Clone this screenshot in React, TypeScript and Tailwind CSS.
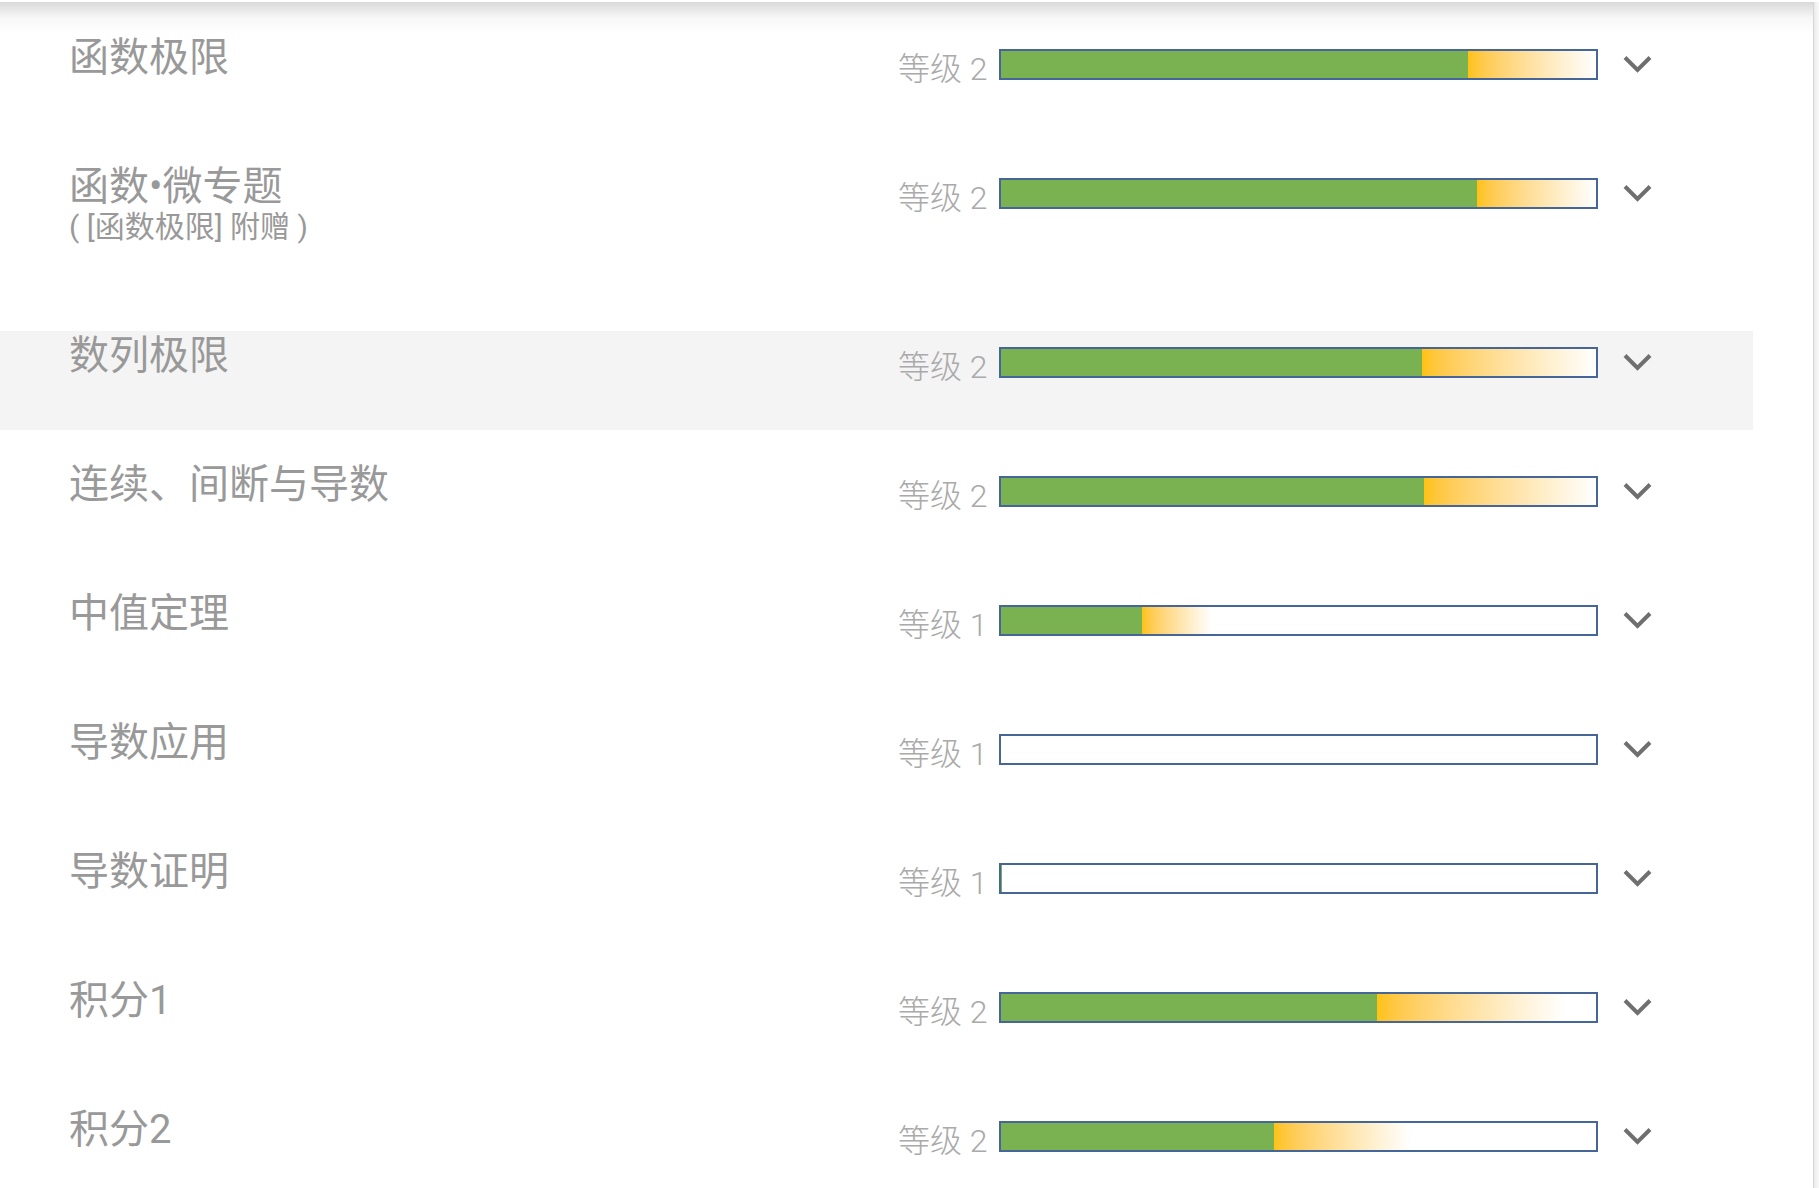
import { Fragment } from 'react'

type Topic = {
    title: string
    sub?: string
    level: number
    progress: number
    active?: boolean
}

const topics: Topic[] = [
    { title: '函数极限', level: 2, progress: 78.5 },
    { title: '函数•微专题', sub: '( [函数极限] 附赠 )', level: 2, progress: 80 },
    { title: '数列极限', level: 2, progress: 70.8, active: true },
    { title: '连续、间断与导数', level: 2, progress: 71.2 },
    { title: '中值定理', level: 1, progress: 23.7 },
    { title: '导数应用', level: 1, progress: 0 },
    { title: '导数证明', level: 1, progress: 0.3 },
    { title: '积分1', level: 2, progress: 63.2 },
    { title: '积分2', level: 2, progress: 46 },
]

const font = "font-['Roboto','Noto_Sans_CJK_SC',sans-serif]"

const Chevron = () => (
    <svg width="29" height="18" viewBox="0 0 29 18" className="block">
        <polyline points="2,2.5 14.5,15 27,2.5" fill="none" stroke="#6f6f6f" strokeWidth="4" />
    </svg>
)

const LevelBar = ({ progress }: { progress: number }) => {
    const fade = Math.min(progress / 2, 100 - progress)
    return (
        <div className="flex w-[599px] h-[31px] border-2 border-[#46669a] bg-white overflow-hidden">
            <div className="h-full bg-[#7ab251]" style={{ width: `${progress}%` }} />
            {progress > 1 && (
                <div className="h-full bg-linear-to-r from-[#ffc20e] to-white" style={{ width: `${fade}%` }} />
            )}
        </div>
    )
}

const TopicRow = ({ t }: { t: Topic }) => {
    return (
        <div className={`flex items-start w-[1753px] ${t.sub ? 'h-[139px]' : 'h-[99px]'} ${t.active ? 'bg-[#f4f4f4]' : ''}`}>
            <div className="w-[898px] pl-[69px] pt-[1px] flex flex-col">
                <span className="text-[40px] leading-[48px] text-[#999999]">{t.title}</span>
                {t.sub && <span className="text-[30px] leading-[32px] text-[#999999]">{t.sub}</span>}
            </div>
            <span className="mt-[18px] text-[32px] leading-[36px] font-light text-[#aaaaaa] whitespace-nowrap">
                等级 {t.level}
            </span>
            <div className="ml-[11px] mt-[16px]">
                <LevelBar progress={t.progress} />
            </div>
            <div className="ml-[25px] mt-[22px]">
                <Chevron />
            </div>
        </div>
    )
}

export default function App() {
    return (
        <div className={`flex w-full min-h-screen bg-white ${font}`}>
            <div className="flex flex-col w-[1813px]">
                <div className="mt-[2px] h-[31px] bg-linear-to-b from-[#d9d9d9] via-[#f7f7f7] to-white" />
                <div className="flex flex-col gap-[30px]">
                    {topics.map((t) => (
                        <Fragment key={t.title}>
                            <TopicRow t={t} />
                        </Fragment>
                    ))}
                </div>
            </div>
            <div className="mt-[2px] w-[6px] border-l border-[#d6d6d6] bg-linear-to-r from-[#ebebeb] to-[#f9f9f9]" />
        </div>
    )
}
